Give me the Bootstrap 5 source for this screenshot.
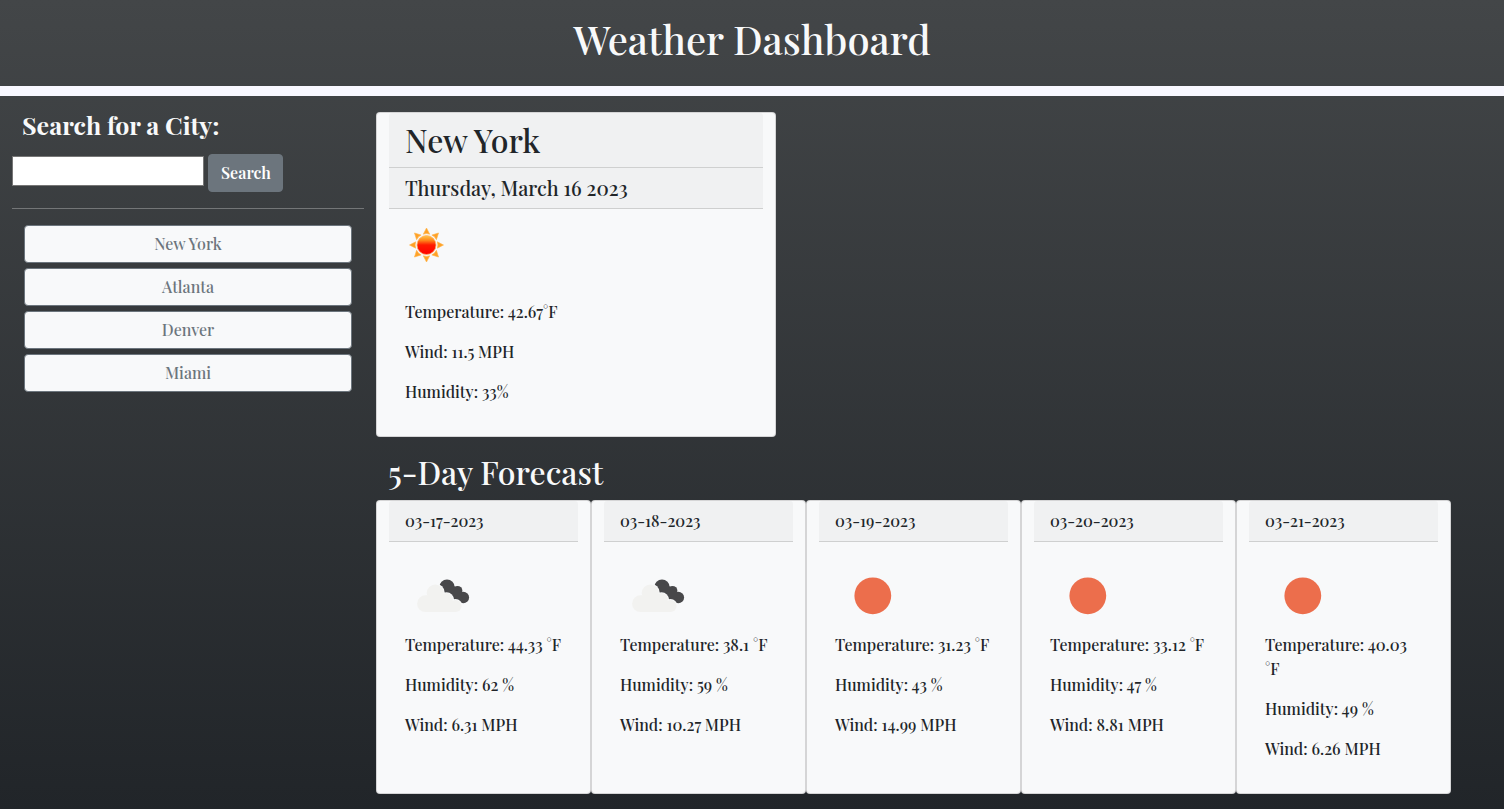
<!DOCTYPE html>
<html lang="en">
<head>
<meta charset="utf-8">
<meta name="viewport" content="width=device-width, initial-scale=1">
<title>Weather Dashboard</title>
<link href="https://cdn.jsdelivr.net/npm/bootstrap@5.3.0/dist/css/bootstrap.min.css" rel="stylesheet">
<style>
  body {
    font-family: "Playfair Display", "Liberation Serif", serif;
    font-weight: 500;
    background: linear-gradient(#434648, #212529) no-repeat;
    min-height: 809px;
    overflow: hidden;
  }
  .page-head { height: 96px; border-bottom: 10px solid ghostwhite; padding-top: 15px; }
  .page-head h1 { font-size: 40px; }
  .search-title { font-size: 25px; line-height: 30px; padding: 14px 0 2px 10px; }
  .search-input { width: 192px; height: 30px; border: 1px solid #767676; background: #fff; margin-top: -4px; }
  .btn { --bs-btn-border-radius: 4px; --bs-btn-font-weight: 500; }
  .btn-find { --bs-btn-font-weight: 600; width: 75px; padding-left: 1px; padding-right: 0; }
  .divider { margin: 16px 0; color: #f8f9fa; opacity: .3; }
  .city-list { gap: 5px; padding: 0 12px; }
  .btn-city { --bs-btn-bg: #f8f9fa; height: 38px; }
  .card { --bs-card-border-radius: 4px; --bs-card-inner-border-radius: 3px; --bs-card-bg: #f8f9fa; --bs-card-cap-bg: rgba(0,0,0,.03); --bs-card-border-color: rgba(0,0,0,.14); padding: 0 12px; color: #212529; }
  .card-now { width: 400px; height: 325px; margin-top: 16px; }
  .card-now h2 { font-size: 32px; margin: 0; }
  .card-now h5 { font-size: 20px; margin: 0; }
  .forecast-title { font-size: 32px; line-height: 38px; margin: 16px 0 9px 12px; }
  .card-day { width: 215px; height: 294px; }
  .icon-now { height: 75px; }
  .icon-day { width: 75px; height: 75px; }
  svg { display: block; }
</style>
</head>
<body>
<header class="page-head text-center text-light">
  <h1 class="m-0">Weather Dashboard</h1>
</header>

<div class="container-fluid p-0">
  <div class="row g-0">
    <aside class="col-3 px-2">
      <div class="px-1">
        <h4 class="search-title text-light fw-bold m-0">Search for a City:</h4>
        <form class="d-flex align-items-center gap-1 mt-2 pt-1">
          <input type="text" class="search-input" aria-label="City">
          <button type="button" class="btn btn-secondary btn-find">Search</button>
        </form>
        <hr class="divider">
        <div class="city-list d-flex flex-column">
          <button type="button" class="btn btn-outline-secondary btn-city">New York</button>
          <button type="button" class="btn btn-outline-secondary btn-city">Atlanta</button>
          <button type="button" class="btn btn-outline-secondary btn-city">Denver</button>
          <button type="button" class="btn btn-outline-secondary btn-city">Miami</button>
        </div>
      </div>
    </aside>

    <main class="col-9">
      <section class="card card-now">
        <div class="card-header"><h2>New York</h2></div>
        <div class="card-header"><h5>Thursday, March 16 2023</h5></div>
        <div class="card-body">
          <div class="icon-now">
            <svg width="43" height="42" viewBox="-21.500 -20 43 42">
              <defs>
                <linearGradient id="sunFill" x1="0" y1="0" x2="0" y2="1">
                  <stop offset="0" stop-color="#ffc94d"/><stop offset=".25" stop-color="#ff8a1c"/>
                  <stop offset=".5" stop-color="#ff1a00"/><stop offset="1" stop-color="#f00"/>
                </linearGradient>
                <path id="ray" d="M0-17 3.200-10.800Q0-12-3.200-10.800Z"/>
              </defs>
              <g fill="#ffa126" stroke="#ffb347" stroke-width=".6" stroke-linejoin="round">
                <use href="#ray"/><use href="#ray" transform="rotate(45)"/><use href="#ray" transform="rotate(90)"/><use href="#ray" transform="rotate(135)"/>
                <use href="#ray" transform="rotate(180)"/><use href="#ray" transform="rotate(225)"/><use href="#ray" transform="rotate(270)"/><use href="#ray" transform="rotate(315)"/>
              </g>
              <circle r="9.500" fill="url(#sunFill)" stroke="#ffb060" stroke-width=".7"/>
            </svg>
          </div>
          <p>Temperature: 42.67°F</p>
          <p>Wind: 11.5 MPH</p>
          <p>Humidity: 33%</p>
        </div>
      </section>

      <h2 class="forecast-title text-light">5-Day Forecast</h2>

      <section class="d-flex">
        <article class="card card-day">
          <div class="card-header">03-17-2023</div>
          <div class="card-body">
            <svg class="icon-day" viewBox="0 0 75 75">
              <g id="clouds">
                <g fill="#48484a">
                  <circle cx="42" cy="29.300" r="7.700"/><circle cx="52.500" cy="32.800" r="4.900"/><circle cx="58.300" cy="39.500" r="5.800"/>
                  <path d="M42 25 49 28 56 34 58 45 50 42 42 36Z"/>
                </g>
                <g fill="#f8f9fa">
                  <circle cx="30.300" cy="35" r="9.500"/><circle cx="41.500" cy="41.800" r="7.500"/><circle cx="50.500" cy="47.800" r="6.800"/>
                </g>
                <g fill="#f2f2f0">
                  <circle cx="20.500" cy="45.700" r="8.400"/><circle cx="30.300" cy="35" r="8.600"/><circle cx="41.500" cy="41.500" r="6.500"/><circle cx="50.500" cy="48" r="6.100"/>
                  <path d="M21 37.500 40 36 47 44 50.500 54.100H20.500Z"/>
                </g>
              </g>
            </svg>
            <p>Temperature: 44.33 °F</p>
            <p>Humidity: 62 %</p>
            <p>Wind: 6.31 MPH</p>
          </div>
        </article>
        <article class="card card-day">
          <div class="card-header">03-18-2023</div>
          <div class="card-body">
            <svg class="icon-day" viewBox="0 0 75 75"><use href="#clouds"/></svg>
            <p>Temperature: 38.1 °F</p>
            <p>Humidity: 59 %</p>
            <p>Wind: 10.27 MPH</p>
          </div>
        </article>
        <article class="card card-day">
          <div class="card-header">03-19-2023</div>
          <div class="card-body">
            <svg class="icon-day" viewBox="0 0 75 75"><circle cx="37.800" cy="37.800" r="18.400" fill="#ec6e4c"/></svg>
            <p>Temperature: 31.23 °F</p>
            <p>Humidity: 43 %</p>
            <p>Wind: 14.99 MPH</p>
          </div>
        </article>
        <article class="card card-day">
          <div class="card-header">03-20-2023</div>
          <div class="card-body">
            <svg class="icon-day" viewBox="0 0 75 75"><circle cx="37.800" cy="37.800" r="18.400" fill="#ec6e4c"/></svg>
            <p>Temperature: 33.12 °F</p>
            <p>Humidity: 47 %</p>
            <p>Wind: 8.81 MPH</p>
          </div>
        </article>
        <article class="card card-day">
          <div class="card-header">03-21-2023</div>
          <div class="card-body">
            <svg class="icon-day" viewBox="0 0 75 75"><circle cx="37.800" cy="37.800" r="18.400" fill="#ec6e4c"/></svg>
            <p>Temperature: 40.03 °F</p>
            <p>Humidity: 49 %</p>
            <p>Wind: 6.26 MPH</p>
          </div>
        </article>
      </section>
    </main>
  </div>
</div>
<script src="https://cdn.jsdelivr.net/npm/bootstrap@5.3.0/dist/js/bootstrap.bundle.min.js"></script>
</body>
</html>
